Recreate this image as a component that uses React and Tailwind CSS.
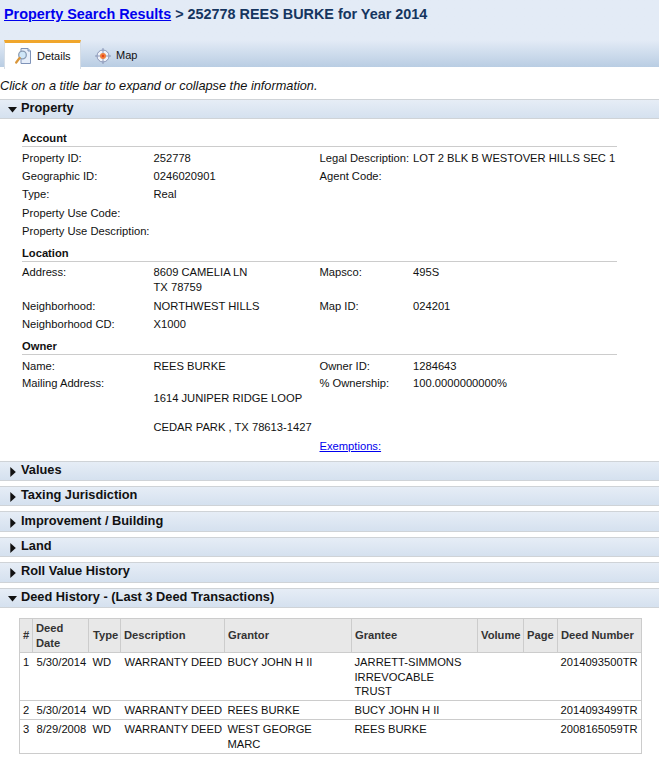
const deeds = [
  { n: "1", date: "5/30/2014", grantor: ["BUCY JOHN H II"], grantee: ["JARRETT-SIMMONS", "IRREVOCABLE", "TRUST"], num: "2014093500TR", h: "h-[48px]" },
  { n: "2", date: "5/30/2014", grantor: ["REES BURKE"], grantee: ["BUCY JOHN H II"], num: "2014093499TR", h: "h-[19px]" },
  { n: "3", date: "8/29/2008", grantor: ["WEST GEORGE", "MARC"], grantee: ["REES BURKE"], num: "2008165059TR", h: "h-[34px]" },
];

function Arrow({ open }) {
  return open ? (
    <svg width="9" height="6" viewBox="0 0 9 6" className="mr-[4px] mt-[7px] shrink-0">
      <path d="M0 0H9L4.5 5.5Z" fill="#111" />
    </svg>
  ) : (
    <svg width="6" height="10" viewBox="0 0 6 10" className="ml-[2px] mr-[5px] mt-[5px] shrink-0">
      <path d="M0.3 0L5.8 5L0.3 10Z" fill="#111" />
    </svg>
  );
}

function Bar({ title, open, h = "h-[20px]" }) {
  return (
    <div className={"flex items-start border-y border-[#cfd3d7] bg-gradient-to-b from-[#e6edf6] to-[#d5e1ef] pl-[8px] " + h}>
      <Arrow open={open} />
      <span className="text-[12.8px] leading-[15px] font-bold text-[#111]">{title}</span>
    </div>
  );
}

function Row({ label, value, label2, value2, h = "h-[18.25px]" }) {
  return (
    <div className={"flex leading-[15px] " + h}>
      <div className="w-[131.5px] shrink-0">{label}</div>
      <div className="w-[166px] shrink-0">{value}</div>
      <div className="w-[93.5px] shrink-0">{label2}</div>
      <div className="whitespace-nowrap">{value2}</div>
    </div>
  );
}

function Heading({ children, className = "" }) {
  return (
    <div className={"mr-[42px] h-[17px] border-b border-[#cccccc] font-bold leading-[16px] " + className}>{children}</div>
  );
}

function DetailsIcon() {
  return (
    <svg width="16" height="16" viewBox="0 0 16 16" className="shrink-0">
      <path d="M6 0.5H13L15.5 3V15.5H6Z" fill="#e6eefa" stroke="#7f93b8" />
      <path d="M13 0.5V3H15.5" fill="#cfdcf0" stroke="#7f93b8" />
      <circle cx="7.5" cy="7" r="3.8" fill="#cfe6f8" stroke="#8a9cb5" strokeWidth="1.3" />
      <path d="M4.6 10L1.2 14.5" stroke="#d9963a" strokeWidth="2.2" strokeLinecap="round" />
    </svg>
  );
}

function MapIcon() {
  return (
    <svg width="16" height="16" viewBox="0 0 16 16" className="shrink-0">
      <circle cx="8" cy="8" r="6" fill="#f1f3f9" stroke="#8b97b8" />
      <path d="M8 0V16M0 8H16" stroke="#8b97b8" />
      <circle cx="8" cy="8" r="3" fill="#f0803c" />
      <circle cx="8" cy="8" r="1.2" fill="#e8401a" />
    </svg>
  );
}

export default function App() {
  return (
    <div className="h-[767px] w-[659px] overflow-hidden bg-white font-['Liberation_Sans',Arial,sans-serif] text-[11.2px] text-[#111]">
      <div className="h-[67px] bg-gradient-to-b from-[#e3ebf6] from-60% to-[#b9cde3]">
        <div className="h-[40px] pl-[4px] pt-[5px] text-[14.4px] leading-[18px] font-bold text-[#15355f]">
          <a href="#" className="text-[#0000ee] underline">Property Search Results</a> &gt; 252778 REES BURKE for Year 2014
        </div>
        <div className="flex pl-[4px] text-[11px]">
          <div className="flex h-[29px] w-[77px] items-center gap-[6px] border-x border-[#d5dde6] border-t-[3px] border-t-[#f0a62c] bg-white pl-[10px]">
            <DetailsIcon />
            <span>Details</span>
          </div>
          <div className="flex h-[29px] items-center gap-[5px] pl-[14px] pt-[2px]">
            <MapIcon />
            <span>Map</span>
          </div>
        </div>
      </div>

      <div className="h-[32px] pt-[11px] text-[12.75px] leading-[15px] italic">
        Click on a title bar to expand or collapse the information.
      </div>

      <Bar title="Property" open />

      <div className="h-[342px] pl-[22px] pt-[11px]">
        <Heading className="mb-[3.5px]">Account</Heading>
        <Row label="Property ID:" value="252778" label2="Legal Description:" value2="LOT 2 BLK B WESTOVER HILLS SEC 1" />
        <Row label="Geographic ID:" value="0246020901" label2="Agent Code:" />
        <Row label="Type:" value="Real" h="h-[18.75px]" />
        <Row label="Property Use Code:" h="h-[17.75px]" />
        <Row label="Property Use Description:" />
        <Heading className="mt-[3px] mb-[3.5px]">Location</Heading>
        <Row label="Address:" value={<>8609 CAMELIA LN<br />TX 78759</>} label2="Mapsco:" value2="495S" h="h-[34px]" />
        <Row label="Neighborhood:" value="NORTHWEST HILLS" label2="Map ID:" value2="024201" h="h-[18px]" />
        <Row label="Neighborhood CD:" value="X1000" h="h-[18px]" />
        <Heading className="mt-[2.5px] mb-[4px]">Owner</Heading>
        <Row label="Name:" value="REES BURKE" label2="Owner ID:" value2="1284643" h="h-[17.5px]" />
        <Row
          label="Mailing Address:"
          value={<div className="pt-[15px]">1614 JUNIPER RIDGE LOOP<div className="mt-[14px]">CEDAR PARK , TX 78613-1427</div></div>}
          label2={<div>% Ownership:<a href="#" className="mt-[48px] block text-[#0000ee] underline">Exemptions:</a></div>}
          value2="100.0000000000%"
        />
      </div>

      <div className="flex flex-col gap-[5px]">
        <Bar title="Values" />
        <Bar title="Taxing Jurisdiction" />
        <Bar title="Improvement / Building" h="h-[21px] pt-[1px]" />
        <Bar title="Land" />
        <Bar title="Roll Value History" h="h-[21px]" />
        <Bar title="Deed History - (Last 3 Deed Transactions)" open />
      </div>

      <div className="pl-[19px] pt-[10px]">
        <table className="w-[622px] table-fixed border-collapse border-b border-[#cccccc] text-left leading-[14.5px]">
          <colgroup>
            <col className="w-[13px]" />
            <col className="w-[56px]" />
            <col className="w-[32px]" />
            <col className="w-[104px]" />
            <col className="w-[127px]" />
            <col className="w-[126px]" />
            <col className="w-[46px]" />
            <col className="w-[34px]" />
            <col className="w-[84px]" />
          </colgroup>
          <thead>
            <tr className="h-[34px] bg-[#e8e8e8] font-bold text-[#333333]">
              {["#", <>Deed<br />Date</>, "Type", "Description", "Grantor", "Grantee", "Volume", "Page", "Deed Number"].map((t, i) => (
                <th key={i} className={"border border-[#cccccc] align-middle leading-[15px] whitespace-nowrap " + (i === 2 ? "pl-[4px] pr-[2px]" : "px-[3px]")}>{t}</th>
              ))}
            </tr>
          </thead>
          <tbody>
            {deeds.map((d) => (
              <tr key={d.n} className={"border-b border-[#cccccc] align-top " + d.h}>
                <td className="border-l border-[#cccccc] pl-[3px] pt-[2px]">{d.n}</td>
                <td className="pl-[4px] pt-[2px] whitespace-nowrap">{d.date}</td>
                <td className="pl-[4px] pt-[2px]">WD</td>
                <td className="pl-[4px] pt-[2px] whitespace-nowrap">WARRANTY DEED</td>
                <td className="px-[3px] pt-[2px]">{d.grantor.map((g) => <div key={g}>{g}</div>)}</td>
                <td className="px-[3px] pt-[2px]">{d.grantee.map((g) => <div key={g}>{g}</div>)}</td>
                <td></td>
                <td></td>
                <td className="border-r border-[#cccccc] px-[3px] pt-[2px]">{d.num}</td>
              </tr>
            ))}
          </tbody>
        </table>
      </div>
    </div>
  );
}
